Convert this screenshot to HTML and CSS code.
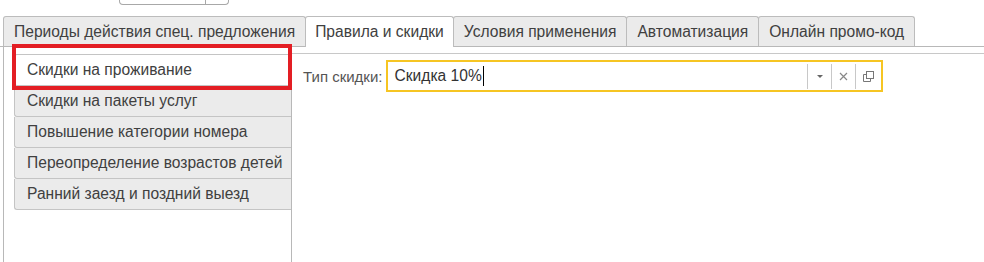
FILE: index.html
```html
<!DOCTYPE html>
<html lang="ru">
<head>
  <meta charset="UTF-8">
  <title>Правила и скидки</title>
  <link rel="stylesheet" href="styles.css">
</head>
<body>

<div class="top-field"><span class="top-field-btn"></span></div>

<div class="tabs">
  <div class="tab">Периоды действия спец. предложения</div>
  <div class="tab active">Правила и скидки</div>
  <div class="tab">Условия применения</div>
  <div class="tab">Автоматизация</div>
  <div class="tab">Онлайн промо-код</div>
</div>

<div class="page">
  <div class="side">
    <div class="side-item selected">Скидки на проживание</div>
    <div class="side-item">Скидки на пакеты услуг</div>
    <div class="side-item">Повышение категории номера</div>
    <div class="side-item">Переопределение возрастов детей</div>
    <div class="side-item">Ранний заезд и поздний выезд</div>
    <div class="highlight"></div>
  </div>

  <div class="content">
    <div class="field-row">
      <label class="field-label">Тип скидки:</label>
      <div class="field">
        <span class="field-value">Скидка 10%</span><span class="caret"></span>
        <div class="field-buttons">
          <span class="field-btn">
            <svg width="8" height="5" viewBox="0 0 8 5"><path d="M1 1h6L4 4z" fill="#666"/></svg>
          </span>
          <span class="field-btn">
            <svg width="9" height="9" viewBox="0 0 9 9"><path d="M1 1l7 7M8 1L1 8" stroke="#888" stroke-width="1.2"/></svg>
          </span>
          <span class="field-btn wide">
            <svg width="11" height="11" viewBox="0 0 11 11">
              <rect x="3.5" y="0.5" width="7" height="7" fill="#fff" stroke="#777"/>
              <path d="M3.5 3.5h-3v7h7v-3" fill="none" stroke="#777"/>
            </svg>
          </span>
        </div>
      </div>
    </div>
  </div>
</div>

</body>
</html>
```

FILE: styles.css
```css
body {
  margin: 0;
  font-family: "Liberation Sans", Arial, sans-serif;
  font-size: 15.6px;
  color: #404040;
  background: #fff;
  height: 262px;
  overflow: hidden;
}

.top-field {
  margin-left: 119px;
  width: 108px;
  height: 4px;
  border: 1px solid #a8a8a8;
  border-top: none;
  border-radius: 0 0 4px 4px;
  position: relative;
}
.top-field-btn {
  position: absolute;
  left: 85px;
  top: 0;
  bottom: 0;
  border-left: 1px solid #a8a8a8;
}

.tabs {
  display: flex;
  margin-top: 11px;
  padding-left: 3px;
  border-bottom: 1px solid #b8b8b8;
  height: 30px;
}
.tab {
  background: #ebebeb;
  border: 1px solid #bcbcbc;
  border-bottom: none;
  border-radius: 3px 3px 0 0;
  padding: 0 10px;
  line-height: 30px;
  height: 30px;
  box-sizing: border-box;
  margin-right: -1px;
  color: #404040;
  white-space: nowrap;
}
.tab.active {
  background: #fff;
  height: 31px;
  position: relative;
  z-index: 1;
  padding: 0 9px;
}

.page {
  display: flex;
  height: 215px;
}

.side {
  position: relative;
  width: 287px;
  margin-left: 3px;
  border-left: 1px solid #b8b8b8;
  border-right: 1px solid #b8b8b8;
  padding-top: 7px;
  flex-shrink: 0;
}
.side-item {
  margin-left: 10px;
  height: 30px;
  line-height: 30px;
  padding-left: 12px;
  background: #ebebeb;
  border: 1px solid #c4c4c4;
  border-right: none;
  border-top: none;
  border-radius: 0 0 0 3px;
  white-space: nowrap;
}
.side-item:first-child {
  border-top: 1px solid #c4c4c4;
  border-radius: 3px 0 0 3px;
}
.side-item.selected {
  background: #fff;
}

.highlight {
  position: absolute;
  left: 8px;
  top: -3px;
  width: 272px;
  height: 38px;
  border: 4px solid #e31e24;
  pointer-events: none;
}

.content {
  flex: 1;
  margin-top: 6px;
  border-top: 1px solid #c8c8c8;
  padding: 6px 0 0 11px;
}

.field-row {
  display: flex;
  align-items: center;
}
.field-label {
  color: #555;
  font-size: 15px;
  margin-right: 4px;
}
.field {
  display: flex;
  align-items: center;
  width: 497px;
  height: 32px;
  box-sizing: border-box;
  border: 2px solid #f6c523;
  padding-left: 6px;
}
.field-value {
  color: #333;
}
.caret {
  width: 1px;
  height: 20px;
  background: #000;
  margin-left: 1px;
}
.field-buttons {
  display: flex;
  margin-left: auto;
}
.field-btn {
  width: 23px;
  height: 25px;
  border-left: 1px solid #c8c8c8;
  display: flex;
  align-items: center;
  justify-content: center;
}
.field-btn.wide {
  width: 25px;
}
```
